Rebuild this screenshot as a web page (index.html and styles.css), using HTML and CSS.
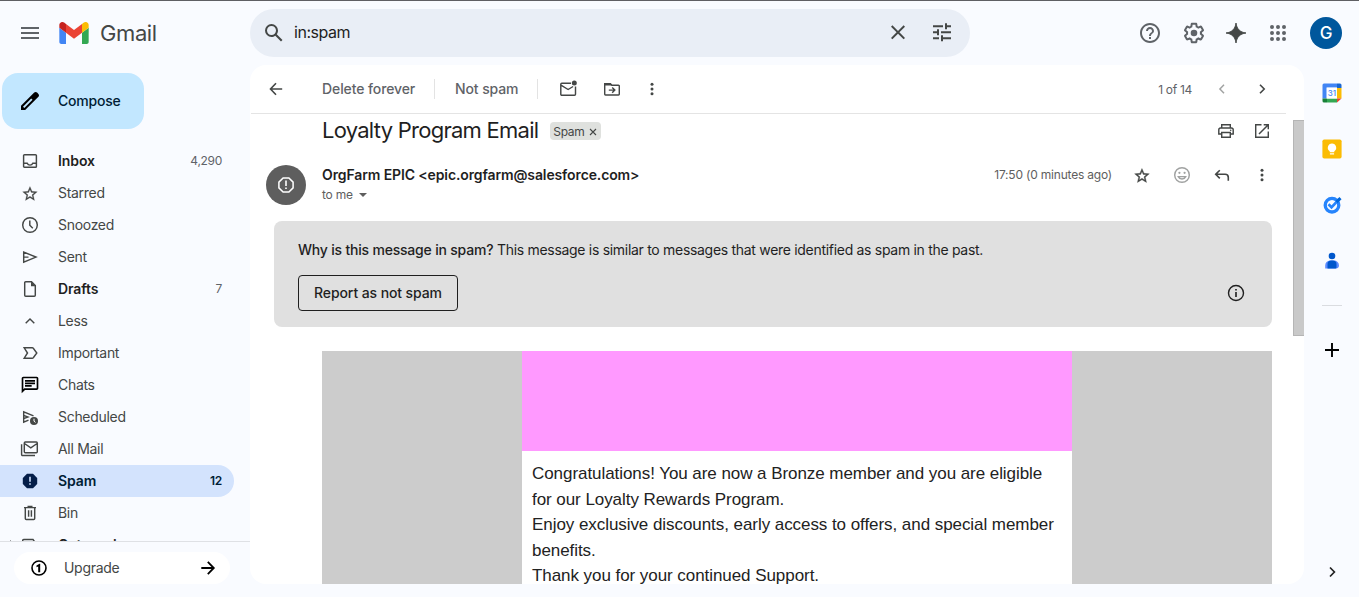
FILE: index.html
```html
<!DOCTYPE html>
<html lang="en">
<head>
<meta charset="utf-8">
<title>Gmail</title>
<link rel="stylesheet" href="styles.css">
</head>
<body>
<div class="app">
  <header class="header">
    <div class="brand">
      <svg class="i24 grey" viewBox="0 0 24 24"><path d="M3 18h18v-2H3v2zm0-5h18v-2H3v2zm0-7v2h18V6H3z"/></svg>
      <svg class="logo" viewBox="52 42 88 66"><path fill="#4285f4" d="M58 108h14V74L52 59v43c0 3.32 2.69 6 6 6"/><path fill="#34a853" d="M120 108h14c3.32 0 6-2.69 6-6V59l-20 15"/><path fill="#fbbc04" d="M120 48v26l20-15v-8c0-7.42-8.47-11.65-14.4-7.2"/><path fill="#ea4335" d="M72 74V48l24 18 24-18v26L96 92"/><path fill="#c5221f" d="M52 51v8l20 15V48l-5.6-4.2c-5.94-4.45-14.4-.22-14.4 7.2"/></svg>
      <span class="brand-name">Gmail</span>
    </div>
    <div class="search">
      <svg class="i24" viewBox="0 0 24 24"><path d="M20.49 19l-5.73-5.73C15.53 12.2 16 10.91 16 9.5A6.5 6.5 0 1 0 9.5 16c1.41 0 2.7-.47 3.77-1.24L19 20.49 20.49 19zM5 9.5C5 7.01 7.01 5 9.5 5S14 7.01 14 9.5 11.99 14 9.5 14 5 11.99 5 9.5z"/></svg>
      <span class="query">in:spam</span>
      <svg class="i24" viewBox="0 0 24 24"><path d="M19 6.41L17.59 5 12 10.59 6.41 5 5 6.41 10.59 12 5 17.59 6.41 19 12 13.41 17.59 19 19 17.59 13.41 12z" transform="translate(0 -.7)"/></svg>
      <svg class="i24 tune" viewBox="0 0 24 24"><path d="M3 17v2h6v-2H3zM3 5v2h10V5H3zm10 16v-2h8v-2h-8v-2h-2v6h2zM7 9v2H3v2h4v2h2V9H7zm14 4v-2H11v2h10zm-6-4h2V7h4V5h-4V3h-2v6z" transform="translate(0 -.7)"/></svg>
    </div>
    <div class="account">
      <svg class="i24 grey" viewBox="0 0 24 24"><path d="M11 18h2v-2h-2v2zm1-16C6.48 2 2 6.48 2 12s4.48 10 10 10 10-4.48 10-10S17.52 2 12 2zm0 18c-4.41 0-8-3.59-8-8s3.59-8 8-8 8 3.59 8 8-3.59 8-8 8zm0-14c-2.21 0-4 1.79-4 4h2c0-1.1.9-2 2-2s2 .9 2 2c0 2-3 1.75-3 5h2c0-2.25 3-2.5 3-5 0-2.210-1.790-4-4-4z"/></svg>
      <svg class="i24 grey gear" viewBox="0 0 24 24"><path d="M13.850 22.250h-3.700c-.74 0-1.360-.54-1.450-1.270l-.27-1.890c-.27-.14-.53-.29-.79-.46l-1.800.72c-.7.260-1.470-.03-1.810-.65L2.200 15.530c-.35-.66-.2-1.440.36-1.880l1.530-1.190c-.01-.15-.02-.3-.02-.46 0-.15.010-.31.020-.46l-1.520-1.190c-.59-.45-.74-1.260-.37-1.880l1.850-3.190c.34-.62 1.110-.9 1.790-.63l1.810.73c.26-.17.520-.32.780-.46l.27-1.910c.09-.7.710-1.250 1.440-1.250h3.700c.74 0 1.360.54 1.450 1.270l.27 1.890c.27.14.53.29.79.46l1.800-.72c.71-.26 1.480.03 1.820.650l1.840 3.180c.36.660.2 1.440-.36 1.880l-1.520 1.190c.01.150.020.300.020.460s-.01.310-.02.460l1.520 1.190c.56.450.720 1.230.370 1.860l-1.860 3.220c-.34.620-1.110.9-1.800.63l-1.800-.72c-.26.170-.52.320-.78.460l-.27 1.910c-.1.680-.72 1.220-1.460 1.220zm-3.230-2h2.760l.37-2.550.53-.22c.44-.18.880-.44 1.340-.78l.45-.34 2.380.96 1.380-2.400-2.030-1.580.07-.56c.03-.26.060-.51.060-.78s-.03-.53-.06-.78l-.07-.56 2.030-1.580-1.390-2.400-2.390.96-.45-.35c-.42-.32-.87-.58-1.330-.77l-.52-.22-.37-2.550h-2.760l-.37 2.550-.53.210c-.44.190-.88.440-1.340.79l-.45.330-2.380-.95-1.390 2.390 2.030 1.580-.07.560a7 7 0 0 0-.06.790c0 .26.020.53.060.78l.07.560-2.030 1.580 1.380 2.400 2.390-.96.450.35c.43.330.86.580 1.330.77l.53.220.38 2.550z"/><circle cx="12" cy="12" r="3.300"/></svg>
      <svg class="i24 spark" viewBox="0 0 24 24"><path d="M12 2C12.800 8 16 11.200 22 12 16 12.800 12.800 16 12 22 11.200 16 8 12.800 2 12 8 11.200 11.200 8 12 2z" stroke="#444746" stroke-width=".9"/></svg>
      <svg class="i24 grey apps" viewBox="0 0 24 24"><path d="M6 8a2 2 0 1 0 0-4 2 2 0 0 0 0 4zm6 12a2 2 0 1 0 0-4 2 2 0 0 0 0 4zm-6 0a2 2 0 1 0 0-4 2 2 0 0 0 0 4zm0-6a2 2 0 1 0 0-4 2 2 0 0 0 0 4zm6 0a2 2 0 1 0 0-4 2 2 0 0 0 0 4zm6-6a2 2 0 1 0 0-4 2 2 0 0 0 0 4zm-6 0a2 2 0 1 0 0-4 2 2 0 0 0 0 4zm6 6a2 2 0 1 0 0-4 2 2 0 0 0 0 4zm0 6a2 2 0 1 0 0-4 2 2 0 0 0 0 4z"/></svg>
      <div class="avatar">G</div>
    </div>
  </header>

  <aside class="sidebar">
    <div class="compose">
      <svg class="i24" viewBox="0 0 24 24"><path fill="#000" d="M20.410 4.940l-1.350-1.350c-.78-.78-2.050-.78-2.830 0L3 16.820V21h4.180L20.410 7.770c.79-.78.790-2.050 0-2.830zM6.350 19L5 17.640 13.180 9.450l1.360 1.360L6.350 19z"/></svg>
      <span>Compose</span>
    </div>
    <nav class="nav">
      <div class="item bold"><svg class="i20" viewBox="0 0 20 20"><path d="M4.500 3.700h11a.9.900 0 0 1 .9.900v10.800a.9.900 0 0 1-.9.900h-11a.9.900 0 0 1-.9-.9V4.600a.9.900 0 0 1 .9-.9zM3.600 12.200h3.600c.5 1.200 1.500 1.900 2.800 1.900s2.300-.7 2.800-1.900h3.600" class="ln"/></svg><span>Inbox</span><em>4,290</em></div>
      <div class="item"><svg class="i20" viewBox="0 0 24 24"><path stroke="#444746" stroke-width=".3" d="M22 9.740l-7.190-.62L12 2.500 9.190 9.130 2 9.740l5.460 4.730-1.640 7.030L12 17.770l6.180 3.730-1.630-7.030L22 9.740zM12 15.900l-3.760 2.270 1-4.280-3.320-2.880 4.380-.38L12 6.600l1.710 4.040 4.380.38-3.320 2.880 1 4.280L12 15.900z" transform="translate(1.400 2) scale(.88)"/></svg><span>Starred</span></div>
      <div class="item"><svg class="i20" viewBox="0 0 20 20"><circle cx="10" cy="10" r="7.300" class="ln"/><path class="ln" d="M9.800 5.500v4.800l3 3"/></svg><span>Snoozed</span></div>
      <div class="item"><svg class="i20" viewBox="0 0 20 20"><path class="ln" d="M3.700 5v10.200L16 10.100 3.700 5zM3.700 10.100h4.800"/></svg><span>Sent</span></div>
      <div class="item bold"><svg class="i20" viewBox="0 0 20 20"><path class="ln" d="M11.500 2.800H5.700a1 1 0 0 0-1 1v12.400a1 1 0 0 0 1 1h8.600a1 1 0 0 0 1-1V6.600z"/><path d="M11 2.500v4.700h4.700z"/></svg><span>Drafts</span><em>7</em></div>
      <div class="item"><svg class="i20" viewBox="0 0 20 20"><path class="ln" d="M5.700 12.200L10 8l4.300 4.200"/></svg><span>Less</span></div>
      <div class="item"><svg class="i20" viewBox="0 0 20 20"><path class="ln" d="M4.200 4.800h8.100c.4 0 .7.200 1 .5L16.800 10l-3.500 4.700c-.3.300-.6.500-1 .5H4.200L7.500 10z"/></svg><span>Important</span></div>
      <div class="item"><svg class="i20" viewBox="0 0 24 24"><path fill="#000" d="M4 4h16v12H5.170L4 17.170V4m0-2c-1.100 0-1.990.9-1.990 2L2 22l4-4h14c1.100 0 2-.9 2-2V4c0-1.100-.9-2-2-2H4zm2 10h8v2H6v-2zm0-3h12v2H6V9zm0-3h12v2H6V6z"/></svg><span>Chats</span></div>
      <div class="item"><svg class="i20" viewBox="0 0 20 20"><path class="ln" d="M8.500 13.200l-4.800 2V4.900l9.800 4M3.700 8.300L8 10l-4.300 1.700"/><circle cx="14" cy="14" r="4"/><path d="M14 11.700v2.500l1.500 1.200" stroke="#fff" fill="none"/></svg><span>Scheduled</span></div>
      <div class="item"><svg class="i20" viewBox="0 0 20 20"><path class="ln" d="M5.300 3h11a1 1 0 0 1 1 1v8.800a1 1 0 0 1-1 1h-11a1 1 0 0 1-1-1V4a1 1 0 0 1 1-1zM4.500 4.500l6.300 4.300 6.300-4.300M1.600 5.300v10.200a1 1 0 0 0 1 1H15"/></svg><span>All Mail</span></div>
      <div class="item bold active"><svg class="i20" viewBox="0 0 20 20"><path fill="#041e49" d="M7 2.800h6L17.200 7v6L13 17.200H7L2.800 13V7z"/><path fill="#d3e3fd" d="M9.200 5.800h1.600v5H9.200zM9.200 12.200h1.600v1.600H9.200z"/></svg><span>Spam</span><em>12</em></div>
      <div class="item"><svg class="i20" viewBox="0 0 20 20"><path class="ln" d="M5.300 5v10.500a1 1 0 0 0 1 1h7.400a1 1 0 0 0 1-1V5M4 4.600h12M7.500 3.500h5M8.600 7.300v6.500M11.400 7.300v6.500"/></svg><span>Bin</span></div>
      <div class="item bold expandable"><svg class="expander" viewBox="0 0 10 10"><path d="M4 0l4 4-4 4z"/></svg><svg class="i20" viewBox="0 0 20 20"><path class="ln" d="M2.700 5.500a1 1 0 0 1 1-1h9.300l4 5.500-4 5.500H3.700a1 1 0 0 1-1-1z"/></svg><span>Categories</span></div>
    </nav>
    <div class="side-foot">
      <div class="upgrade">
        <svg class="i20" viewBox="0 0 20 20"><circle cx="10" cy="10" r="7" fill="none" stroke="#000" stroke-width="1.600"/><path fill="#000" d="M9.200 14.200V8.500l-1.700.7V7.600l3-1.800h.7v8.400z"/></svg>
        <span>Upgrade</span>
        <svg class="i20" viewBox="0 0 20 20"><path fill="none" stroke="#000" stroke-width="1.800" d="M3.300 10h12M9.800 3.900l6 6.100-6 6.100"/></svg>
      </div>
    </div>
  </aside>

  <main class="panel">
    <div class="toolbar">
      <svg class="i20" viewBox="0 0 20 20"><path class="ln md" d="M16.200 10H5M10 4.300L4.500 10l5.500 5.700"/></svg>
      <span class="action del">Delete forever</span>
      <i class="sep"></i>
      <span class="action not">Not spam</span>
      <i class="sep"></i>
      <svg class="i20 unread" viewBox="0 0 20 20"><path class="ln" d="M13 4.200H3.800a1 1 0 0 0-1 1v10a1 1 0 0 0 1 1h12.700a1 1 0 0 0 1-1V7.500M3 6.200l7.100 4.300 5-3"/><circle cx="16.300" cy="4" r="2.500"/></svg>
      <svg class="i20 moveto" viewBox="0 0 20 20"><path class="ln" d="M3.500 4.700h4.800l1.600 1.600h6.600a.8.800 0 0 1 .8.800v8a.8.800 0 0 1-.8.800h-13a.8.800 0 0 1-.8-.8V5.500a.8.800 0 0 1 .8-.8z"/><path d="M2 4h6.500l2 2.500H2z"/><path class="ln" d="M6.800 11.100h5.500M10.200 8.500l2.600 2.600-2.600 2.600"/></svg>
      <svg class="i20 more" viewBox="0 0 20 20"><circle cx="10" cy="5.200" r="1.500"/><circle cx="10" cy="10" r="1.500"/><circle cx="10" cy="14.800" r="1.500"/></svg>
      <span class="count">1 of 14</span>
      <svg class="i20 prev" viewBox="0 0 20 20"><path class="ln" d="M12 5.800L7.900 10l4.100 4.200"/></svg>
      <svg class="i20 next" viewBox="0 0 20 20"><path class="ln md" d="M8 5.800l4.200 4.200L8 14.200"/></svg>
    </div>

    <div class="message">
      <div class="subject">
        <h1>Loyalty Program Email</h1>
        <span class="chip">Spam <svg viewBox="0 0 8 8"><path d="M1 1l6 6M7 1L1 7"/></svg></span>
        <svg class="i20 print" viewBox="0 0 20 20"><path class="ln" d="M5.700 7V3.700h8.600V7M5.700 13H2.800V8.800A1.800 1.800 0 0 1 4.600 7h10.800a1.800 1.800 0 0 1 1.800 1.800V13h-2.900M5.700 11.500h8.600v4.800H5.700z"/><circle cx="14.700" cy="9.300" r=".8"/></svg>
        <svg class="i20" viewBox="0 0 20 20"><path class="ln" d="M9.500 3.700H3.700v12.600h12.600v-5.800M11.700 3.700h4.600v4.600M16 4l-9 9"/></svg>
      </div>

      <div class="sender">
        <div class="spam-avatar"><svg class="i20" viewBox="0 0 20 20"><path fill="none" stroke="#fff" stroke-width="1.500" d="M7.100 2.900h5.800l4.200 4.200v5.800l-4.200 4.200H7.100l-4.200-4.200V7.100z"/><path fill="#fff" d="M9.200 5.500h1.600v5.600H9.200zM9.200 12.500h1.600v1.600H9.200z"/></svg></div>
        <div class="who">
          <b>OrgFarm EPIC &lt;epic.orgfarm@salesforce.com&gt;</b>
          <span class="tome">to me <i class="caret"></i></span>
        </div>
        <div class="meta">
          <span class="time">17:50 (0 minutes ago)</span>
          <svg class="i20" viewBox="0 0 24 24"><path stroke="#444746" stroke-width=".5" d="M22 9.740l-7.190-.62L12 2.500 9.190 9.130 2 9.740l5.460 4.730-1.640 7.030L12 17.770l6.180 3.730-1.630-7.030L22 9.740zM12 15.900l-3.760 2.270 1-4.280-3.320-2.880 4.380-.38L12 6.600l1.710 4.040 4.380.38-3.320 2.880 1 4.280L12 15.900z" transform="translate(1.400 2) scale(.88)"/></svg>
          <svg class="i20 smile" viewBox="0 0 20 20"><circle cx="10" cy="10" r="7.300" class="ln"/><circle cx="7.400" cy="7.800" r="1.100"/><circle cx="12.600" cy="7.800" r="1.100"/><path class="ln" d="M6.300 11.600c.7 1.500 2 2.300 3.700 2.300s3-.8 3.700-2.300z"/></svg>
          <svg class="i20" viewBox="0 0 20 20"><path class="ln md" d="M16.300 15.800v-3.300c0-2-1.300-3.200-3.200-3.200H4M7.800 5.200L3.700 9.300l4.100 4.100"/></svg>
          <svg class="i20" viewBox="0 0 20 20"><circle cx="10" cy="5.200" r="1.500"/><circle cx="10" cy="10" r="1.500"/><circle cx="10" cy="14.800" r="1.500"/></svg>
        </div>
      </div>

      <div class="notice">
        <p><b>Why is this message in spam?</b> <span>This message is similar to messages that were identified as spam in the past.</span></p>
        <div class="notice-row">
          <button class="report">Report as not spam</button>
          <svg class="i20" viewBox="0 0 20 20"><circle cx="10" cy="10" r="7.500" fill="none" stroke="#1f1f1f" stroke-width="1.400"/><path fill="#1f1f1f" d="M9.200 9h1.600v5H9.200zM9.200 6h1.600v1.600H9.200z"/></svg>
        </div>
      </div>

      <div class="mail">
        <div class="mail-card">
          <div class="banner"></div>
          <p>Congratulations! You are now a Bronze member and you are eligible for our Loyalty Rewards Program.<br>Enjoy exclusive discounts, early access to offers, and special member benefits.<br>Thank you for your continued Support.</p>
        </div>
      </div>
    </div>
    <div class="thumb"></div>
  </main>

  <aside class="rail">
    <svg class="i20" viewBox="0 0 20 20"><path fill="#4285f4" d="M2 .5h13v4.200H5v10.800H.5V2A1.500 1.500 0 0 1 2 .5z"/><path fill="#1967d2" d="M15 .5h3A1.500 1.500 0 0 1 19.500 2v3H15z"/><path fill="#fbbc04" d="M15 5h4.500v10.500H15z"/><path fill="#188038" d="M.5 15.500H5v4H2A1.500 1.500 0 0 1 .5 18z"/><path fill="#34a853" d="M5 15.500h10v4H5z"/><path fill="#ea4335" d="M15 15.500h4.500l-4.500 4z"/><path fill="#fff" d="M4.500 4.500H15v11H4.500z"/><text x="9.900" y="13" text-anchor="middle" class="cal">31</text></svg>
    <svg class="i20" viewBox="0 0 20 20"><rect x=".4" y=".4" width="19.200" height="19.200" rx="1.800" fill="#fbbc04"/><path fill="#fff" d="M10 4.600a4.200 4.200 0 0 0-2.300 7.700v1h4.600v-1A4.200 4.200 0 0 0 10 4.600zM7.900 14.200h4.200v1.300H7.900z"/></svg>
    <svg class="i20" viewBox="0 0 20 20"><circle cx="10" cy="10.200" r="6.800" fill="none" stroke="#2684fc" stroke-width="3.300"/><path d="M6.500 9.300l3 3L17.300 4" fill="none" stroke="#2684fc" stroke-width="2.700"/><path d="M14.500 7l4-3.800" stroke="#0066da" stroke-width="3"/></svg>
    <svg class="i20" viewBox="0 0 20 20"><circle cx="10" cy="5" r="3.300" fill="#0057cc"/><path fill="#5c8cff" d="M3.200 17.500v-3A5 5 0 0 1 8 9.500h4a5 5 0 0 1 5 5c0 1.700-1.300 3-3 3z"/><path fill="#0057cc" d="M5.500 17.500v-4.300A3.700 3.700 0 0 1 9.200 9.500h1.600a3.700 3.700 0 0 1 3.700 3.700v3.300a1 1 0 0 1-1 1z"/></svg>
    <i class="rail-line"></i>
    <svg class="i20" viewBox="0 0 20 20"><path d="M10 3v14M3 10h14" stroke="#000" stroke-width="1.900"/></svg>
    <svg class="i20 collapse" viewBox="0 0 20 20"><path d="M8 5.500l4.400 4.500L8 14.500" fill="none" stroke="#222" stroke-width="1.700"/></svg>
  </aside>
</div>
</body>
</html>
```

FILE: styles.css
```css
* { box-sizing: border-box; }
body {
  margin: 0;
  font-family: Inter, Roboto, sans-serif;
  font-size: 14px;
  color: #1f1f1f;
  background: #f9fbff;
  overflow: hidden;
}
svg { display: block; flex: none; fill: #444746; }
.ln { fill: none; stroke: #444746; stroke-width: 1.45; }
.md { stroke-width: 1.6; }
.i24 { width: 24px; height: 24px; }
.i20 { width: 20px; height: 20px; }
.grey { fill: #5f6368; }

.app {
  display: grid;
  grid-template-columns: 250px 1054px 55px;
  grid-template-rows: 64px 519px 13px;
  height: 597px;
  border-top: 1px solid #5f5f63;
}
.header { grid-column: 1 / 4; grid-row: 1; display: flex; align-items: center; }
.brand { width: 250px; display: flex; align-items: center; padding-left: 18px; }
.logo { width: 30px; height: 22px; margin-left: 17px; }
.brand-name { margin-left: 11px; font-size: 22px; letter-spacing: -0.4px; color: #444746; }
.search {
  width: 720px; height: 48px; border-radius: 24px; background: #e9eef6;
  display: flex; align-items: center; padding: 0 16px 0 12px;
}
.query { flex: 1; margin-left: 8px; padding-bottom: 2px; font-size: 16px; letter-spacing: -0.45px; }
.tune { margin-left: 20px; }
.account { display: flex; align-items: center; margin-left: 168px; }
.gear { margin-left: 20px; }
.spark, .apps { margin-left: 18px; }
.avatar {
  width: 32px; height: 32px; border-radius: 50%; margin-left: 20px;
  background: #00579c; color: #fff; font-size: 17px; font-weight: 500;
  display: flex; align-items: center; justify-content: center;
}

.sidebar { grid-column: 1; grid-row: 2 / 4; display: flex; flex-direction: column; padding-top: 8px; min-height: 0; }
.compose {
  width: 142px; height: 56px; margin-left: 2px; border-radius: 16px; background: #c2e7ff;
  display: flex; align-items: center; gap: 16px; padding-left: 16px;
  font-weight: 500; color: #001d35; letter-spacing: -0.2px;
}
.compose span, .item span, .item em, .upgrade span { padding-bottom: 1px; }
.nav { margin-top: 16px; height: 396px; overflow: hidden; }
.item {
  height: 32px; width: 234px; padding: 0 12px 0 20px; display: flex; align-items: center;
  color: #444746; letter-spacing: -0.3px;
}
.item span { margin-left: 18px; flex: 1; }
.item em { font-style: normal; font-size: 12px; font-weight: 400; color: #5f6368; }
.item.bold { font-weight: 600; color: #1f1f1f; letter-spacing: -0.1px; }
.item.bold em { letter-spacing: -0.3px; }
.item.expandable { padding-left: 6px; letter-spacing: 0.1px; }
.expander { width: 10px; height: 10px; margin-right: 4px; }
.item.active { background: #d3e3fd; border-radius: 0 16px 16px 0; color: #001d35; }
.item.active em { font-weight: 600; color: #001d35; }
.side-foot { flex: 1; border-top: 1px solid #dfe1e5; padding: 10px 0 0 14px; }
.upgrade {
  width: 216px; height: 32px; border-radius: 16px; background: #fff;
  display: flex; align-items: center; padding: 0 12px 0 15px; color: #444746;
}
.upgrade span { flex: 1; margin-left: 15px; letter-spacing: -0.3px; }

.panel { grid-column: 2; grid-row: 2; position: relative; background: #fff; border-radius: 16px; overflow: hidden; }
.toolbar {
  height: 49px; width: 1035px; margin-left: 1px; padding-left: 15px; display: flex; align-items: center;
  border-bottom: 1px solid #e4e4e4; color: #5f6368;
}
.action { font-weight: 500; letter-spacing: -0.1px; white-space: nowrap; padding-bottom: 1px; }
.del { width: 112px; margin-left: 36px; }
.sep { width: 1px; height: 20px; background: #e3e3e3; }
.not { width: 82px; margin-left: 20px; }
.unread { margin-left: 20px; }
.moveto { margin-left: 24px; }
.more { margin-left: 20px; }
.count { flex: 1; text-align: right; font-size: 12px; letter-spacing: -0.3px; }
.prev { margin-left: 20px; opacity: .5; }
.next { margin: 0 14px 0 20px; }

.subject { height: 34px; display: flex; align-items: center; padding: 0 32px 0 72px; }
h1 { margin: 0; padding-bottom: 2px; font-size: 22px; font-weight: 400; letter-spacing: -0.74px; white-space: nowrap; }
.chip {
  height: 18px; margin-left: 12px; padding: 0 4px 0 3px; border-radius: 4px; background: #dfe1de;
  display: flex; align-items: center; gap: 5px; font-size: 12px; letter-spacing: -0.35px; color: #444746;
}
.chip svg { width: 8px; height: 8px; margin-top: 2px; stroke: #444746; stroke-width: 1.1; }
.print { margin: 0 16px 0 auto; }

.sender { height: 73px; display: flex; padding: 17px 32px 0 16px; }
.spam-avatar {
  width: 40px; height: 40px; border-radius: 50%; background: #5e5e5e;
  display: flex; align-items: center; justify-content: center;
}
.who { margin-left: 16px; flex: 1; line-height: 20px; }
.who b { display: block; font-weight: 600; letter-spacing: -0.12px; white-space: nowrap; }
.tome { display: flex; align-items: center; font-size: 12px; letter-spacing: -0.2px; color: #5e5e5e; }
.caret { margin-left: 6px; border: 4px solid transparent; border-top-color: #5e5e5e; border-bottom: 0; }
.meta { display: flex; height: 20px; align-items: center; gap: 20px; }
.time { font-size: 12px; letter-spacing: -0.2px; color: #5e5e5e; padding-bottom: 1px; }
.smile { opacity: .5; }

.notice {
  width: 998px; height: 106px; margin-left: 24px; border-radius: 8px; background: #e0e0e0;
  padding: 19px 26px 0 24px;
}
.notice p { margin: 0; line-height: 20px; letter-spacing: -0.3px; white-space: nowrap; }
.notice b { font-weight: 500; letter-spacing: -0.2px; }
.notice-row { display: flex; align-items: center; justify-content: space-between; margin-top: 15px; }
.report {
  width: 160px; height: 36px; padding: 0 0 2px; border: 1px solid #1f1f1f; border-radius: 4px; background: none;
  font: 500 14px Inter, Roboto, sans-serif; letter-spacing: -0.1px; color: #1f1f1f;
}

.mail { width: 950px; margin: 24px 0 0 72px; padding: 0 200px; background: #ccc; }
.mail-card { background: #fff; height: 240px; }
.banner { height: 100px; background: #ff99ff; }
.mail-card p {
  margin: 0; padding: 10px 10px 0; font: 17px/25.5px "Liberation Sans", Arial, sans-serif;
  letter-spacing: -0.06px; color: #222;
}
.thumb {
  position: absolute; right: 0; top: 55px; width: 11px; height: 216px;
  background: #c9c9c9; border: 1px solid #b5b5b5; border-right: 0;
}

.rail { grid-column: 3; grid-row: 2 / 4; display: flex; flex-direction: column; align-items: center; gap: 36px; padding-top: 18px; }
.rail-line { width: 20px; height: 1px; margin: -2px 0 -2px; background: #dadce0; }
.collapse { margin: auto 0 15px; }
.cal { font: 500 8px Inter, sans-serif; fill: #4285f4; }
```
